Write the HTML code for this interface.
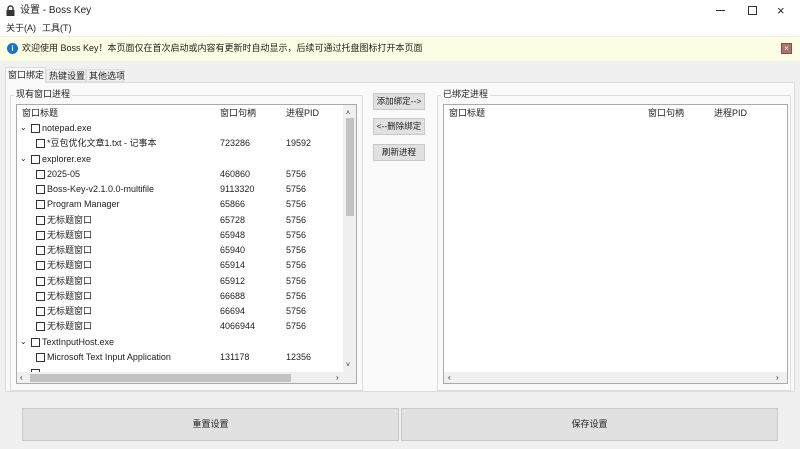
<!DOCTYPE html>
<html><head><meta charset="utf-8"><style>
*{box-sizing:border-box;margin:0;padding:0}
body{width:800px;height:449px;overflow:hidden;background:#f0f0f0;font-family:"Liberation Sans","Noto Sans CJK SC",sans-serif;font-size:9px;color:#222;position:relative;line-height:11px}
.a{position:absolute;white-space:nowrap;line-height:11px}
.cb{position:absolute;width:9px;height:9px;border:1px solid #333;background:#fff}
.btn{position:absolute;background:#e1e1e1;border:1px solid #c8c8c8;text-align:center}
</style></head><body>
<div class="a" style="left:0;top:0;width:800px;height:22px;background:#fff"></div>
<svg class="a" style="left:6px;top:5px" width="9" height="11"><path d="M2 5V3.5a2.5 2.5 0 0 1 5 0V5" stroke="#333" stroke-width="1.4" fill="none"/><rect x="0.5" y="5" width="8" height="6" fill="#333"/></svg>
<div class="a" style="left:20px;top:5px;font-size:10px">设置 - Boss Key</div>
<div class="a" style="left:716px;top:10px;width:9px;height:1px;background:#333"></div>
<div class="a" style="left:748px;top:6px;width:9px;height:9px;border:1px solid #333"></div>
<div class="a" style="left:777px;top:5px;font-size:13px">×</div>
<div class="a" style="left:0;top:22px;width:800px;height:14px;background:#fff"></div>
<div class="a" style="left:6px;top:23px">关于(A)</div>
<div class="a" style="left:42px;top:23px">工具(T)</div>
<div class="a" style="left:0;top:37px;width:800px;height:24px;background:#fdfde3"></div>
<div class="a" style="left:7px;top:43px;width:11px;height:11px;border-radius:50%;background:#1a73c8;color:#fff;font-size:8px;text-align:center;line-height:11px;font-weight:bold">i</div>
<div class="a" style="left:22px;top:43px;font-size:9px">欢迎使用 Boss Key！本页面仅在首次启动或内容有更新时自动显示，后续可通过托盘图标打开本页面</div>
<div class="a" style="left:781px;top:43px;width:11px;height:11px;background:#b07070;border:1px solid #805050;color:#fff;font-size:8px;text-align:center;line-height:9px">×</div>
<div class="a" style="left:5px;top:82px;width:790px;height:310px;background:#fafafa;border:1px solid #ddd"></div>
<div class="a" style="left:5px;top:67px;width:41px;height:16px;background:#fafafa;border:1px solid #ddd;border-bottom:none"></div>
<div class="a" style="left:8px;top:70px">窗口绑定</div>
<div class="a" style="left:46px;top:69px;width:40px;height:13px;border:1px solid #ddd;background:#f0f0f0"></div>
<div class="a" style="left:49px;top:71px">热键设置</div>
<div class="a" style="left:86px;top:69px;width:38px;height:13px;border:1px solid #ddd;background:#f0f0f0"></div>
<div class="a" style="left:89px;top:71px">其他选项</div>
<div class="a" style="left:10px;top:95px;width:353px;height:296px;border:1px solid #ddd"></div>
<div class="a" style="left:14px;top:89px;background:#fafafa;padding:0 2px">现有窗口进程</div>
<div class="a" style="left:16px;top:104px;width:341px;height:280px;background:#fff;border:1px solid #aaa"></div>
<div class="a" style="left:22px;top:108px">窗口标题</div>
<div class="a" style="left:220px;top:108px">窗口句柄</div>
<div class="a" style="left:286px;top:108px">进程PID</div>
<div class="a" style="left:343px;top:105px;width:13px;height:267px;background:#f0f0f0"></div>
<div class="a" style="left:346px;top:108px;font-size:7px">˄</div>
<div class="a" style="left:346px;top:118px;width:8px;height:98px;background:#c2c2c2"></div>
<div class="a" style="left:346px;top:360px;font-size:7px">˅</div>
<div class="a" style="left:17px;top:372px;width:339px;height:11px;background:#f0f0f0"></div>
<div class="a" style="left:30px;top:374px;width:261px;height:8px;background:#c2c2c2"></div>
<div class="a" style="left:20px;top:372px;font-size:8px">‹</div>
<div class="a" style="left:336px;top:372px;font-size:8px">›</div>
<div id="rows"></div>
<div class="btn" style="left:373px;top:93px;width:52px;height:17px;line-height:15px;font-size:8.5px">添加绑定--&gt;</div>
<div class="btn" style="left:373px;top:118px;width:52px;height:17px;line-height:15px;font-size:8.5px">&lt;--删除绑定</div>
<div class="btn" style="left:373px;top:144px;width:52px;height:17px;line-height:15px;font-size:8.5px">刷新进程</div>
<div class="a" style="left:437px;top:95px;width:354px;height:296px;border:1px solid #ddd"></div>
<div class="a" style="left:441px;top:89px;background:#fafafa;padding:0 2px">已绑定进程</div>
<div class="a" style="left:443px;top:104px;width:345px;height:280px;background:#fff;border:1px solid #aaa"></div>
<div class="a" style="left:449px;top:108px">窗口标题</div>
<div class="a" style="left:648px;top:108px">窗口句柄</div>
<div class="a" style="left:714px;top:108px">进程PID</div>
<div class="a" style="left:444px;top:372px;width:343px;height:11px;background:#f0f0f0"></div>
<div class="a" style="left:448px;top:372px;font-size:8px">‹</div>
<div class="a" style="left:776px;top:372px;font-size:8px">›</div>
<div class="btn" style="left:22px;top:408px;width:377px;height:33px;line-height:31px">重置设置</div>
<div class="btn" style="left:401px;top:408px;width:377px;height:33px;line-height:31px">保存设置</div>
<script>
var R=[[0,"notepad.exe"],[1,"*豆包优化文章1.txt - 记事本","723286","19592"],[0,"explorer.exe"],[1,"2025-05","460860","5756"],[1,"Boss-Key-v2.1.0.0-multifile","9113320","5756"],[1,"Program Manager","65866","5756"],[1,"无标题窗口","65728","5756"],[1,"无标题窗口","65948","5756"],[1,"无标题窗口","65940","5756"],[1,"无标题窗口","65914","5756"],[1,"无标题窗口","65912","5756"],[1,"无标题窗口","66688","5756"],[1,"无标题窗口","66694","5756"],[1,"无标题窗口","4066944","5756"],[0,"TextInputHost.exe"],[1,"Microsoft Text Input Application","131178","12356"]];
var h="";R.forEach(function(r,i){var y=123+i*15.25;
if(r[0]==0){h+='<div class="a" style="left:20px;top:'+(y-1)+'px;font-size:8px">⌄</div><div class="cb" style="left:31px;top:'+(y+1)+'px"></div><div class="a" style="left:42px;top:'+y+'px">'+r[1]+'</div>';}
else{h+='<div class="cb" style="left:36px;top:'+(y+1)+'px"></div><div class="a" style="left:47px;top:'+y+'px">'+r[1]+'</div><div class="a" style="left:220px;top:'+y+'px">'+r[2]+'</div><div class="a" style="left:286px;top:'+y+'px">'+r[3]+'</div>';}});
h+='<div class="a" style="left:17px;top:367px;width:320px;height:5px;overflow:hidden"><div class="cb" style="left:14px;top:2px"></div></div>';
document.getElementById("rows").innerHTML=h;
</script>
</body></html>
